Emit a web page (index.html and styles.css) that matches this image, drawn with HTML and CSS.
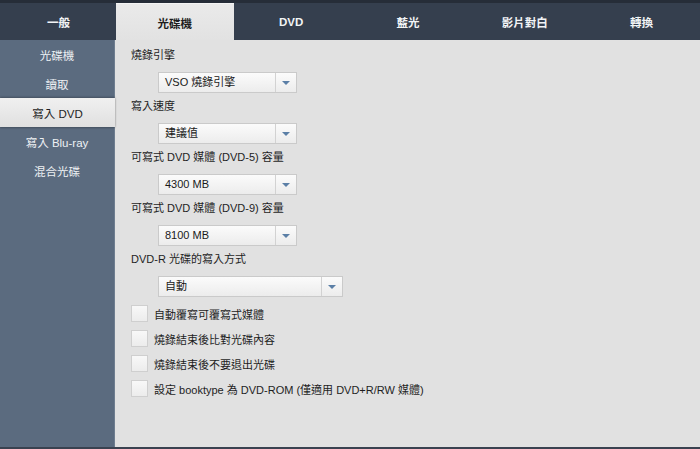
FILE: index.html
```html
<!DOCTYPE html>
<html lang="zh-TW">
<head>
    <meta charset="UTF-8">
    <title>設定</title>
    <link rel="stylesheet" href="styles.css">
</head>
<body>
    <div class="tabs">
        <div class="tab">一般</div>
        <div class="tab active">光碟機</div>
        <div class="tab">DVD</div>
        <div class="tab">藍光</div>
        <div class="tab">影片對白</div>
        <div class="tab">轉換</div>
    </div>

    <div class="main">
        <ul class="side-menu">
            <li>光碟機</li>
            <li>讀取</li>
            <li class="active">寫入 DVD</li>
            <li>寫入 Blu-ray</li>
            <li>混合光碟</li>
        </ul>

        <div class="content">
            <div class="field">
                <div class="label">燒錄引擎</div>
                <div class="select">
                    <span class="value">VSO 燒錄引擎</span>
                    <span class="arrow"></span>
                </div>
            </div>
            <div class="field">
                <div class="label">寫入速度</div>
                <div class="select">
                    <span class="value">建議值</span>
                    <span class="arrow"></span>
                </div>
            </div>
            <div class="field">
                <div class="label">可寫式 DVD 媒體 (DVD-5) 容量</div>
                <div class="select">
                    <span class="value">4300 MB</span>
                    <span class="arrow"></span>
                </div>
            </div>
            <div class="field">
                <div class="label">可寫式 DVD 媒體 (DVD-9) 容量</div>
                <div class="select">
                    <span class="value">8100 MB</span>
                    <span class="arrow"></span>
                </div>
            </div>
            <div class="field">
                <div class="label">DVD-R 光碟的寫入方式</div>
                <div class="select wide">
                    <span class="value">自動</span>
                    <span class="arrow"></span>
                </div>
            </div>

            <div class="checks">
                <label class="check"><span class="box"></span>自動覆寫可覆寫式媒體</label>
                <label class="check"><span class="box"></span>燒錄結束後比對光碟內容</label>
                <label class="check"><span class="box"></span>燒錄結束後不要退出光碟</label>
                <label class="check"><span class="box"></span>設定 booktype 為 DVD-ROM (僅適用 DVD+R/RW 媒體)</label>
            </div>
        </div>
    </div>
</body>
</html>
```

FILE: styles.css
```css
* {
    margin: 0;
    padding: 0;
    box-sizing: border-box;
}

body {
    font-family: "Liberation Sans", "Noto Sans CJK TC", sans-serif;
    font-size: 11px;
    background: #e1e1e1;
    width: 700px;
    height: 449px;
    display: flex;
    flex-direction: column;
    overflow: hidden;
    border-bottom: 2px solid #3a4250;
}

/* top tabs */
.tabs {
    display: flex;
    height: 40px;
    background: #353f4e;
    border-top: 3px solid #262d38;
}

.tab {
    flex: 1;
    display: flex;
    align-items: center;
    justify-content: center;
    color: #f2f4f6;
    font-weight: bold;
    font-size: 11.5px;
    padding-top: 1px;
}

.tab.active {
    flex: 0 0 118px;
    margin-left: -1px;
    margin-right: -1px;
    background: linear-gradient(#eaeaea, #e2e2e2);
    color: #1d1d1d;
    border-top: 1px solid #f4f4f4;
}

.main {
    flex: 1;
    display: flex;
}

/* left menu */
.side-menu {
    width: 115px;
    background: #5b6b7f;
    list-style: none;
    border-right: 1px solid #6e7d8f;
}

.side-menu li {
    height: 29px;
    display: flex;
    align-items: center;
    justify-content: center;
    color: #eef1f4;
    font-size: 11.5px;
}

.side-menu li.active {
    background: linear-gradient(#f0f0f0, #e0e0e0);
    color: #1f1f1f;
    box-shadow: 0 -1px 2px rgba(0, 0, 0, 0.25), 0 1px 2px rgba(0, 0, 0, 0.25);
    margin-right: -1px;
    position: relative;
}

/* content */
.content {
    flex: 1;
    padding: 7px 0 0 16px;
}

.field {
    margin-bottom: 5px;
}

.field + .field .label {
    margin-top: 1px;
}

.label {
    color: #1e1e1e;
    height: 16px;
    line-height: 16px;
    margin-bottom: 9px;
}

.select {
    margin-left: 27px;
    width: 139px;
    height: 21px;
    display: flex;
    border: 1px solid #cacaca;
    background: linear-gradient(#fbfbfb, #ececec);
}

.select.wide {
    width: 185px;
}

.select .value {
    flex: 1;
    padding-left: 6px;
    line-height: 19px;
    color: #1a1a1a;
    border-right: 1px solid #d2d2d2;
}

.select .arrow {
    width: 20px;
    display: flex;
    align-items: center;
    justify-content: center;
}

.select .arrow::after {
    content: "";
    border-left: 4px solid transparent;
    border-right: 4px solid transparent;
    border-top: 4px solid #5b7fa6;
}

.checks {
    margin-top: 8px;
    display: flex;
    flex-direction: column;
    gap: 8px;
}

.check {
    display: flex;
    align-items: center;
    gap: 6px;
    color: #1e1e1e;
    height: 17px;
}

.box {
    width: 17px;
    height: 17px;
    border: 1px solid #cfcfcf;
    background: linear-gradient(#f8f8f8, #ececec);
}
```
